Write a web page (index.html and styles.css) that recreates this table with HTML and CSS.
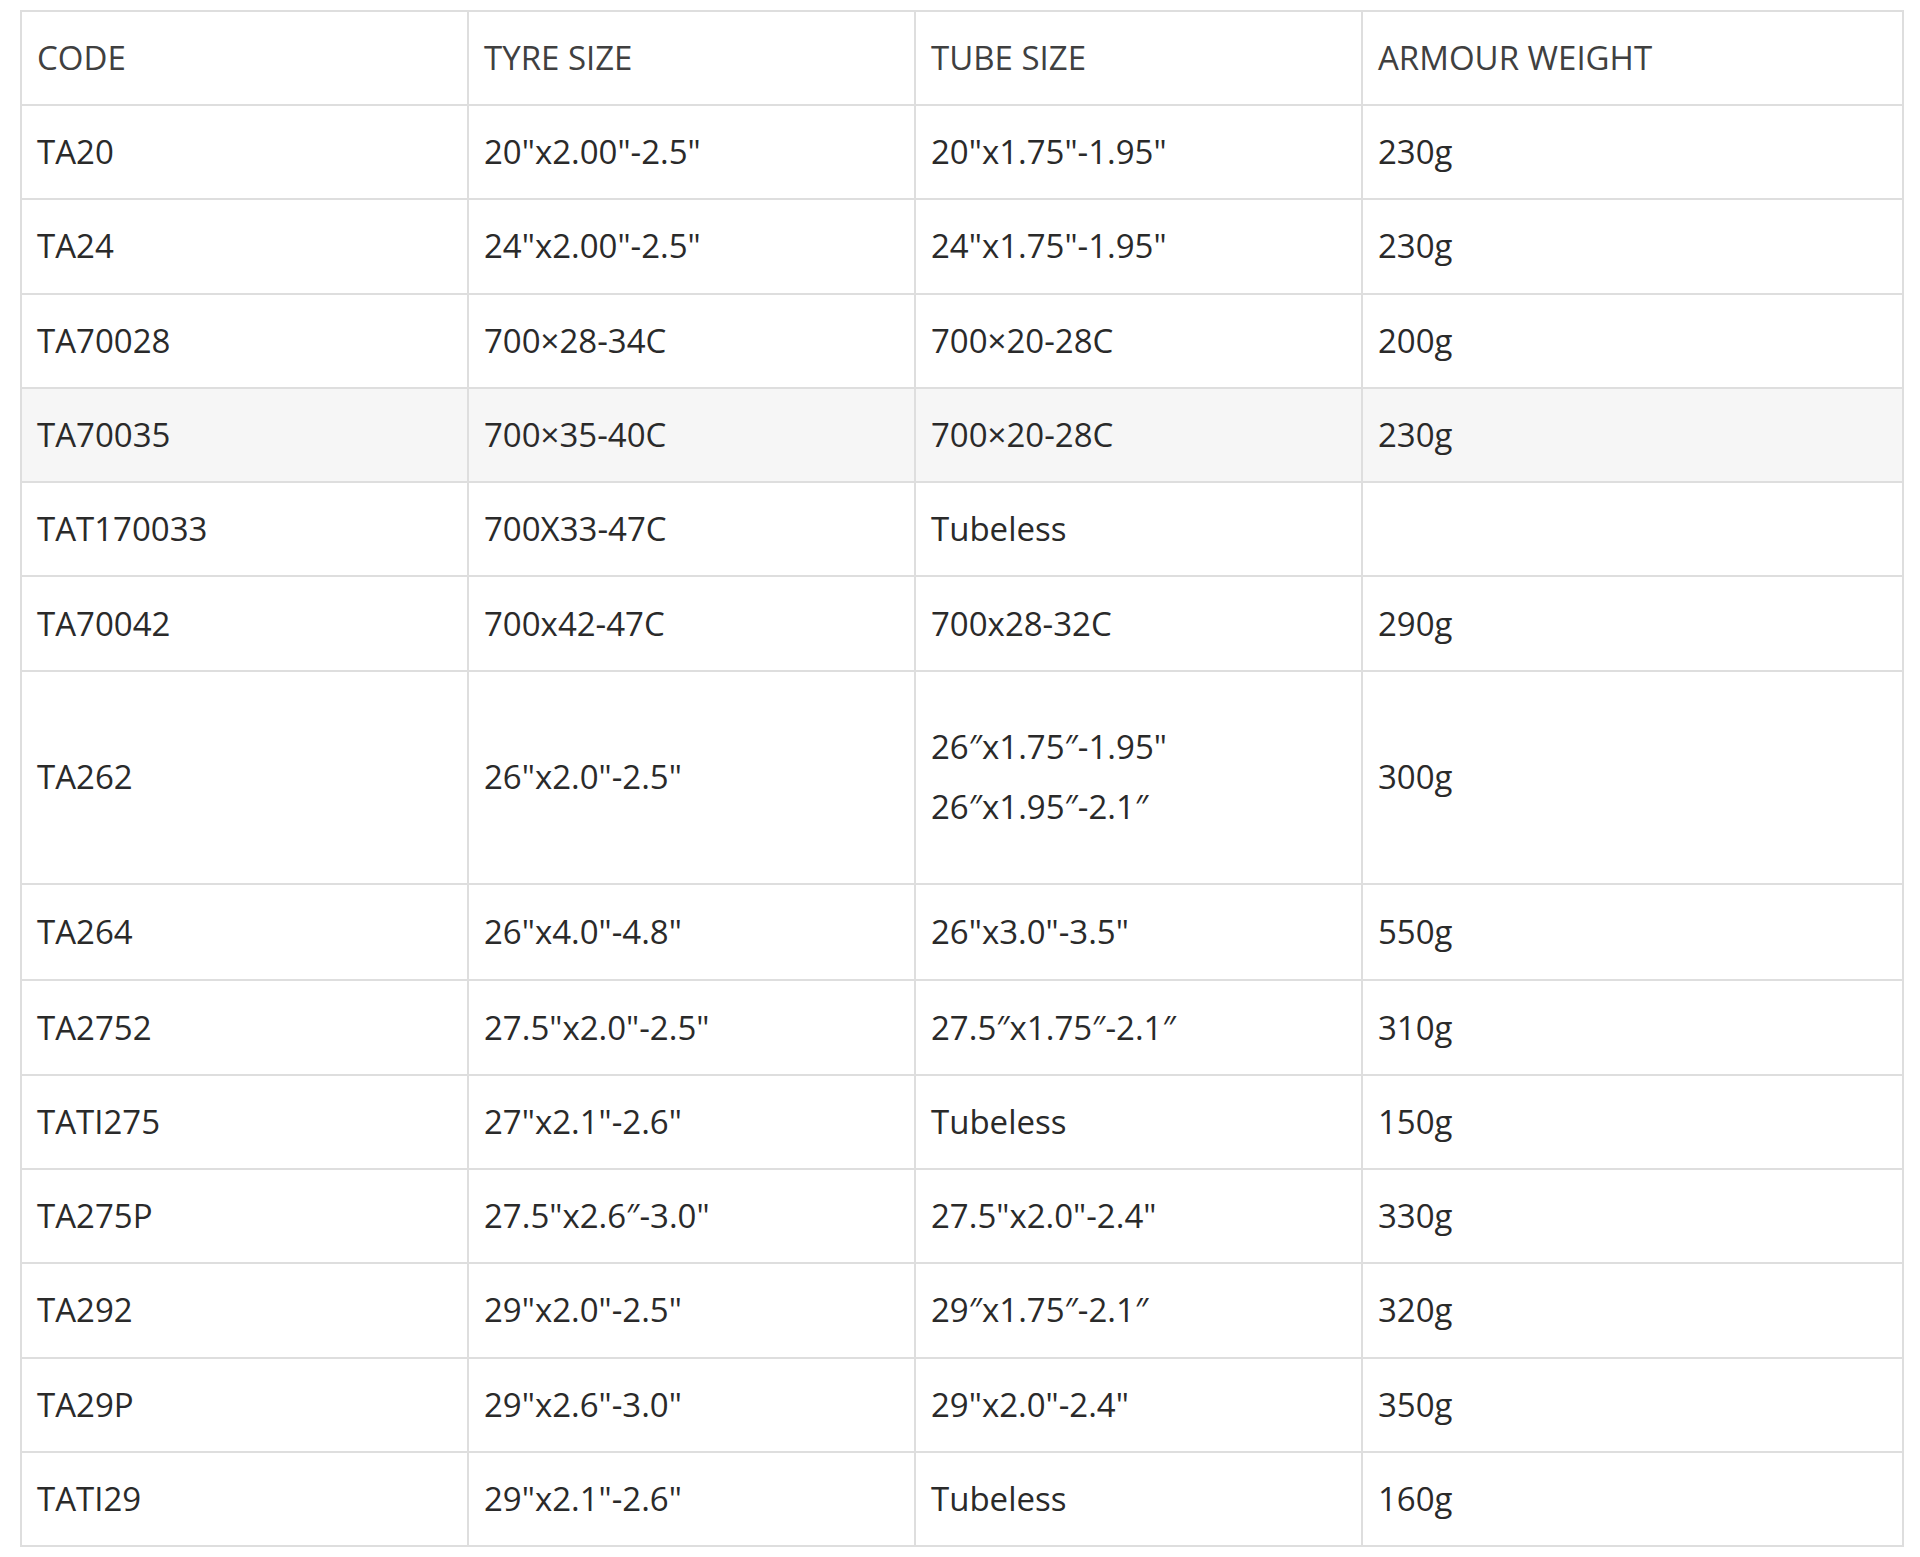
FILE: index.html
```html
<!DOCTYPE html>
<html lang="en">
<head>
<meta charset="utf-8">
<title>Tyre Armour Sizes</title>
<link rel="stylesheet" href="styles.css">
</head>
<body>
<div class="wrap">
<table class="sizes">
  <colgroup>
    <col class="c1"><col class="c2"><col class="c3"><col class="c4">
  </colgroup>
  <thead>
    <tr><th>CODE</th><th>TYRE SIZE</th><th>TUBE SIZE</th><th>ARMOUR WEIGHT</th></tr>
  </thead>
  <tbody>
    <tr><td>TA20</td><td>20"x2.00"-2.5"</td><td>20"x1.75"-1.95"</td><td>230g</td></tr>
    <tr><td>TA24</td><td>24"x2.00"-2.5"</td><td>24"x1.75"-1.95"</td><td>230g</td></tr>
    <tr><td>TA70028</td><td>700×28-34C</td><td>700×20-28C</td><td>200g</td></tr>
    <tr class="hl"><td>TA70035</td><td>700×35-40C</td><td>700×20-28C</td><td>230g</td></tr>
    <tr><td>TAT170033</td><td>700X33-47C</td><td>Tubeless</td><td></td></tr>
    <tr><td>TA70042</td><td>700x42-47C</td><td>700x28-32C</td><td>290g</td></tr>
    <tr class="tall"><td>TA262</td><td>26"x2.0"-2.5"</td><td><div class="ln">26″x1.75″-1.95"</div><div class="ln">26″x1.95″-2.1″</div></td><td>300g</td></tr>
    <tr class="r264"><td>TA264</td><td>26"x4.0"-4.8"</td><td>26"x3.0"-3.5"</td><td>550g</td></tr>
    <tr><td>TA2752</td><td>27.5"x2.0"-2.5"</td><td>27.5″x1.75″-2.1″</td><td>310g</td></tr>
    <tr><td>TATI275</td><td>27"x2.1"-2.6"</td><td>Tubeless</td><td>150g</td></tr>
    <tr><td>TA275P</td><td>27.5"x2.6″-3.0"</td><td>27.5"x2.0"-2.4"</td><td>330g</td></tr>
    <tr><td>TA292</td><td>29"x2.0"-2.5"</td><td>29″x1.75″-2.1″</td><td>320g</td></tr>
    <tr><td>TA29P</td><td>29"x2.6"-3.0"</td><td>29"x2.0"-2.4"</td><td>350g</td></tr>
    <tr><td>TATI29</td><td>29"x2.1"-2.6"</td><td>Tubeless</td><td>160g</td></tr>
  </tbody>
</table>
</div>
</body>
</html>
```
FILE: styles.css
```css
html, body {
  margin: 0;
  padding: 0;
  background: #ffffff;
}

.wrap {
  padding: 10px 16px 0 20px;
}

.sizes {
  width: 1884px;
  border-collapse: collapse;
  table-layout: fixed;
  font-family: "Open Sans", "DejaVu Sans", sans-serif;
  font-size: 33px;
  color: #2a2a2a;
}

.c1, .c2, .c3 { width: 447px; }

.sizes th,
.sizes td {
  border: 2px solid #dedede;
  height: 94.3px;
  padding: 0 15px;
  text-align: left;
  vertical-align: middle;
  line-height: 44px;
  box-sizing: border-box;
  white-space: nowrap;
}

.sizes th {
  font-weight: 400;
  color: #404040;
  height: 94px;
}

.sizes .hl td {
  background: #f6f6f6;
}

.sizes .tall td {
  height: 213px;
}

.sizes .r264 td {
  height: 96.6px;
}

.ln {
  line-height: 60px;
}
```
